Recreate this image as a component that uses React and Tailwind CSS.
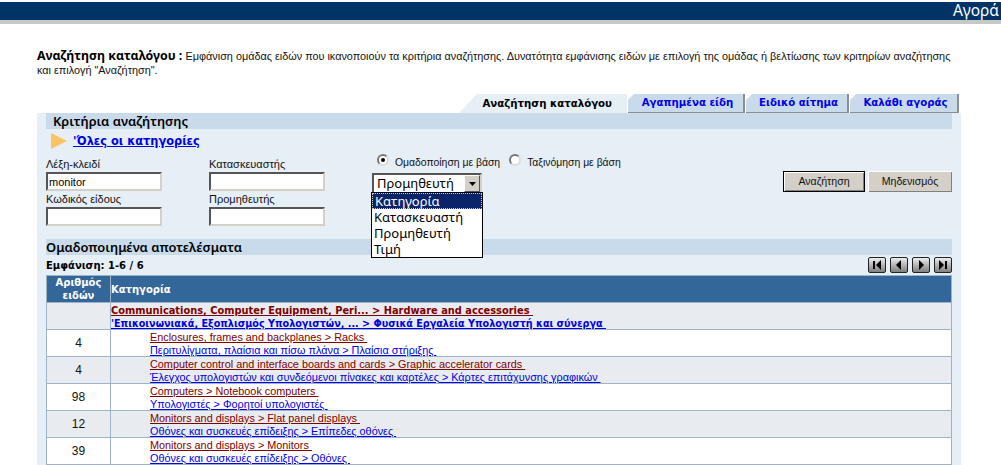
const ui = '[font-family:"Liberation_Sans",sans-serif]';
const noto = '[font-family:"Noto_Sans",sans-serif]';

function Tab({ label, active, w }) {
  if (active) {
    return (
      <div className={`${w} h-[19px] bg-[#e6eef6] [clip-path:polygon(18px_0,100%_0,100%_100%,0_100%)] flex items-center justify-end pr-[15px] text-[10.2px] font-bold text-black`}>
        {label}
      </div>
    );
  }
  return (
    <div className={`${w} h-[19px] pl-[4px] bg-[#c9dbea] border-r-2 border-b border-[#8a8f96] [clip-path:polygon(6px_0,100%_0,100%_100%,0_100%,0_6px)] flex items-center justify-center text-[10.2px] font-bold text-[#0000e6]`}>
      {label}
    </div>
  );
}

function Field({ label, value }) {
  return (
    <div className="w-[163px]">
      <div className={`h-[16px] leading-[16px] text-[11px] text-[#111] ${ui}`}>{label}</div>
      <input
        readOnly
        value={value || ''}
        className={`block w-[116px] h-[19px] bg-white border-2 border-t-[#555] border-l-[#555] border-r-[#d4d0c8] border-b-[#d4d0c8] px-[1px] text-[11px] text-black outline-none ${ui}`}
      />
    </div>
  );
}

function Radio({ checked }) {
  return (
    <span className="inline-flex items-center justify-center w-[12px] h-[12px] -translate-y-[3px] rounded-full bg-white border-2 border-t-[#777] border-l-[#777] border-r-[#ddd] border-b-[#ddd]">
      {checked && <span className="w-[4px] h-[4px] rounded-full bg-black" />}
    </span>
  );
}

function NavBtn({ children }) {
  return (
    <div className="w-[18px] h-[16px] rounded-[2px] border border-[#222] bg-gradient-to-b from-[#eeeeee] to-[#808080] flex items-center justify-center">
      <svg width="12" height="10" viewBox="0 0 12 10" fill="#000">{children}</svg>
    </div>
  );
}

const rows = [
  ['4', 'Enclosures, frames and backplanes > Racks ', 'Περιτυλίγματα, πλαίσια και πίσω πλάνα > Πλαίσια στήριξης ', false],
  ['4', 'Computer control and interface boards and cards > Graphic accelerator cards ', "Έλεγχος υπολογιστών και συνδεόμενοι πίνακες και καρτέλες > Κάρτες επιτάχυνσης γραφικών ", true],
  ['98', 'Computers > Notebook computers ', 'Υπολογιστές > Φορητοί υπολογιστές ', false],
  ['12', 'Monitors and displays > Flat panel displays ', 'Οθόνες και συσκευές επίδειξης > Επίπεδες οθόνες ', true],
  ['39', 'Monitors and displays > Monitors ', 'Οθόνες και συσκευές επίδειξης > Οθόνες ', false],
];

export default function App() {
  return (
    <div className={`w-[1001px] h-[465px] overflow-hidden bg-white ${ui}`}>
      <div className="h-[2px]" />
      <div className={`h-[18px] bg-[#003366] flex items-center justify-end pr-[2px] text-[15.5px] text-white ${noto}`}>Αγορά</div>
      <div className="h-[4px] bg-[#c8c8c8]" />

      <div className="ml-[37px] w-[920px] mt-[25px] h-[45px] text-[10.85px] leading-[14px] text-[#111]">
        <span className={`${noto} text-[12.4px] leading-[14px] font-bold text-black`}>Αναζήτηση καταλόγου : </span>
        Εμφάνιση ομάδας ειδών που ικανοποιούν τα κριτήρια αναζήτησης. Δυνατότητα εμφάνισης ειδών με επιλογή της ομάδας ή βελτίωσης των κριτηρίων αναζήτησης και επιλογή "Αναζήτηση".
      </div>

      <div className="ml-[37px] w-[924px] [font-family:'DejaVu_Sans',sans-serif]">
        <div className="flex justify-end gap-[1px] pr-[2px]">
          <Tab active w="w-[168px]" label="Αναζήτηση καταλόγου" />
          <Tab w="w-[117px]" label="Αγαπημένα είδη" />
          <Tab w="w-[103px]" label="Ειδικό αίτημα" />
          <Tab w="w-[109px]" label="Καλάθι αγοράς" />
        </div>

        <div className="bg-[#e6eef6] h-[352px] px-[9px]">
          <div className={`h-[16px] bg-[#c9dbea] pl-[7px] text-[12.9px] leading-[16px] font-semibold text-black ${noto}`}>Κριτήρια αναζήτησης</div>

          <div className="h-[24px] flex items-center pl-[5px] gap-[6px]">
            <svg width="16" height="16" viewBox="0 0 16 16">
              <polygon points="0,0 16,8 0,16" fill="#fbc463" />
            </svg>
            <a className="pt-[1px] text-[11.4px] font-bold text-[#0000e6] underline whitespace-pre">'Όλες οι κατηγορίες</a>
          </div>

          <div className="h-[86px] flex items-start pt-[3px]">
            <div className="flex flex-col gap-0">
              <Field label="Λέξη-κλειδί" value="monitor" />
              <Field label="Κωδικός είδους" />
            </div>
            <div className="flex flex-col">
              <Field label="Κατασκευαστής" />
              <Field label="Προμηθευτής" />
            </div>
            <div className="w-[411px] relative">
              <div className={`h-[14px] flex items-center text-[10.4px] text-[#111] ${ui}`}>
                <span className="ml-[5px] mr-[6px] flex"><Radio checked /></span>
                <span>Ομαδοποίηση με βάση</span>
                <span className="ml-[9px] mr-[6px] flex"><Radio /></span>
                <span>Ταξινόμηση με βάση</span>
              </div>
              <div className={`mt-[3px] w-[110px] h-[21px] border-2 border-t-[#555] border-l-[#555] border-r-[#d4d0c8] border-b-[#d4d0c8] bg-white flex items-center justify-between text-[13px] text-black pl-[3px] ${noto}`}>
                <span>Προμηθευτή</span>
                <span className="w-[16px] h-[17px] bg-[#d4d0c8] border border-t-white border-l-white border-r-[#555] border-b-[#555] flex items-center justify-center">
                  <svg width="7" height="4" viewBox="0 0 7 4"><polygon points="0,0 7,0 3.5,4" fill="#000" /></svg>
                </span>
              </div>
              <div className={`absolute left-[-1px] top-[36px] w-[112px] h-[66px] border border-black bg-white text-[13px] leading-[16px] text-black z-10 ${noto}`}>
                <div className="h-[16px] bg-[#0a246a] text-white pl-[2px] border border-dotted border-[#e8d070] leading-[14px]">Κατηγορία</div>
                <div className="pl-[2px]">Κατασκευαστή</div>
                <div className="pl-[2px]">Προμηθευτή</div>
                <div className="pl-[2px]">Τιμή</div>
              </div>
            </div>
            <div className={`flex gap-[3px] mt-[15px] text-[10.6px] text-[#111] ${ui}`}>
              <div className="w-[82px] h-[21px] bg-[#d4d0c8] border border-black shadow-[inset_1px_1px_0_#fff,inset_-1px_-1px_0_#808080] flex items-center justify-center">Αναζήτηση</div>
              <div className="w-[84px] h-[21px] bg-[#d4d0c8] shadow-[inset_1px_1px_0_#fff,inset_-1px_-1px_0_#808080] flex items-center justify-center">Μηδενισμός</div>
            </div>
          </div>

          <div className={`h-[16px] bg-[#c9dbea] text-[12.9px] leading-[16px] font-semibold text-black ${noto}`}>Ομαδοποιημένα αποτελέσματα</div>

          <div className="h-[20px] flex items-center justify-between">
            <span className="text-[10px] font-bold text-black">Εμφάνιση: 1-6 / 6</span>
            <div className="flex gap-[4px]">
              <NavBtn><rect x="2" y="1" width="2" height="8" /><polygon points="10,0 5,5 10,10" /></NavBtn>
              <NavBtn><polygon points="8,0 3,5 8,10" /></NavBtn>
              <NavBtn><polygon points="4,0 9,5 4,10" /></NavBtn>
              <NavBtn><polygon points="2,0 7,5 2,10" /><rect x="8" y="1" width="2" height="8" /></NavBtn>
            </div>
          </div>

          <table className="w-[906px] table-fixed border-collapse border border-[#9db4c8]">
            <colgroup>
              <col className="w-[64px]" />
              <col />
            </colgroup>
            <thead>
              <tr className="h-[27px] bg-[#336699] text-white text-[10px] leading-[13px] font-bold">
                <th className="border border-[#9db4c8] text-center font-bold">Αριθμός<br />ειδών</th>
                <th className="border border-[#9db4c8] text-left pl-0 font-bold">Κατηγορία</th>
              </tr>
            </thead>
            <tbody>
              <tr className="h-[26px] bg-[#e8ecf0] font-bold">
                <td className="border border-[#9db4c8]" />
                <td className="border border-[#9db4c8] pl-0 whitespace-pre">
                  <div className="h-[14px] leading-[15px] text-[9.85px] text-[#800000] underline">Communications, Computer Equipment, Peri... &gt; Hardware and accessories </div>
                  <div className="h-[12px] leading-[13px] text-[9.65px] text-[#0000e6] underline">'Επικοινωνιακά, Εξοπλισμός Υπολογιστών, ... &gt; Φυσικά Εργαλεία Υπολογιστή και σύνεργα </div>
                </td>
              </tr>
              {rows.map((r, i) => (
                <tr key={i} className={`h-[27px] text-[10.85px] ${ui} ${r[3] ? 'bg-[#e8ecf0]' : 'bg-white'}`}>
                  <td className="border border-[#9db4c8] text-center text-[12px] leading-[15px] text-[#111]">{r[0]}</td>
                  <td className="border border-[#9db4c8] pl-[39px] whitespace-pre">
                    <div className="h-[14px] leading-[15px] text-[#800000] underline">{r[1]}</div>
                    <div className="h-[12px] leading-[13px] text-[#0000e6] underline">{r[2]}</div>
                  </td>
                </tr>
              ))}
            </tbody>
          </table>
        </div>
      </div>
    </div>
  );
}
